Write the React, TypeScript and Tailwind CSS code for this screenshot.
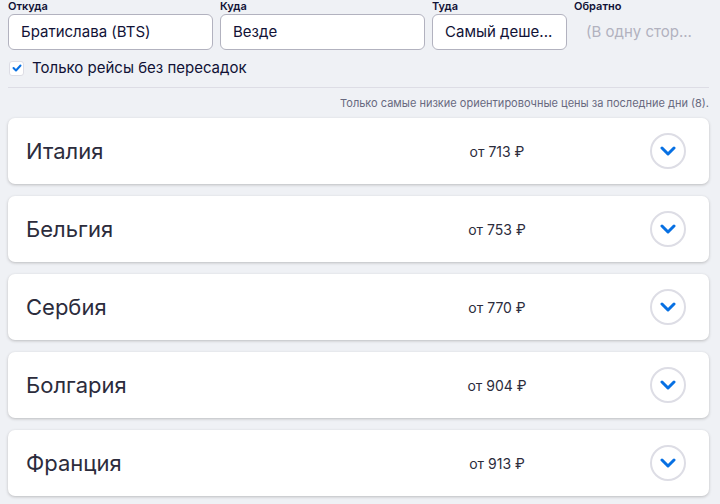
import React from "react";

const countries = [
  { name: "Италия", price: "от 713 ₽" },
  { name: "Бельгия", price: "от 753 ₽" },
  { name: "Сербия", price: "от 770 ₽" },
  { name: "Болгария", price: "от 904 ₽" },
  { name: "Франция", price: "от 913 ₽" },
];

function Chevron() {
  return (
    <svg width="16" height="10" viewBox="0 0 16 10" fill="none">
      <path d="M2 2l6 6 6-6" stroke="#0770e3" strokeWidth="3" strokeLinecap="round" strokeLinejoin="round" />
    </svg>
  );
}

export default function App() {
  return (
    <div
      className="w-[720px] h-[504px] overflow-hidden bg-[#eff1f5] pl-[8px] pr-[11px] text-[#111236]"
      style={{ fontFamily: "Inter, 'Noto Sans', sans-serif" }}
    >
      <div className="grid grid-cols-[205px_205px_135px_1fr] gap-x-[7px] pt-[0px]">
        {[
          { label: "Откуда", value: "Братислава (BTS)", border: true },
          { label: "Куда", value: "Везде", border: true },
          { label: "Туда", value: "Самый деше...", border: true },
          { label: "Обратно", value: "(В одну стор...", border: false },
        ].map((f) => (
          <div key={f.label} className="flex flex-col">
            <div className="h-[14px] text-[11px] leading-[12px] font-semibold">{f.label}</div>
            <div
              className={
                f.border
                  ? "h-[36px] rounded-[6px] border border-[#b2b2bf] bg-white px-[12px] flex items-center text-[15px] whitespace-nowrap"
                  : "h-[36px] px-[12px] flex items-center text-[15px] text-[#b2b2bf] whitespace-nowrap"
              }
            >
              {f.value}
            </div>
          </div>
        ))}
      </div>
      <div className="flex items-center gap-[8px] h-[38px] border-b border-[#dddde5] pl-[1px] pb-[1px]">
        <div className="w-[15px] h-[15px] rounded-[3px] border border-[#dddde5] bg-white flex items-center justify-center">
          <svg width="10" height="8" viewBox="0 0 10 8" fill="none">
            <path d="M1.5 4l2.5 2.5L8.5 1.5" stroke="#0770e3" strokeWidth="2" strokeLinecap="round" strokeLinejoin="round" />
          </svg>
        </div>
        <span className="text-[15px]">Только рейсы без пересадок</span>
      </div>
      <div className="h-[30px] flex items-center justify-end text-[11px] text-[#68697f]">
        Только самые низкие ориентировочные цены за последние дни (8).
      </div>
      <div className="flex flex-col gap-[12px]">
        {countries.map((c) => (
          <div
            key={c.name}
            className="h-[66px] bg-white rounded-[7px] shadow-[0_1px_3px_rgba(37,32,31,0.25)] flex items-center pl-[18px] pr-[23px]"
          >
            <div className="flex-1 text-[22px] text-[#2c2c3c]">{c.name}</div>
            <div className="w-[120px] text-center text-[14px] text-[#2c2c3c]">{c.price}</div>
            <div className="w-[93px]" />
            <div className="w-[36px] h-[36px] rounded-full border-2 border-[#dddde5] flex items-center justify-center">
              <Chevron />
            </div>
          </div>
        ))}
      </div>
    </div>
  );
}
